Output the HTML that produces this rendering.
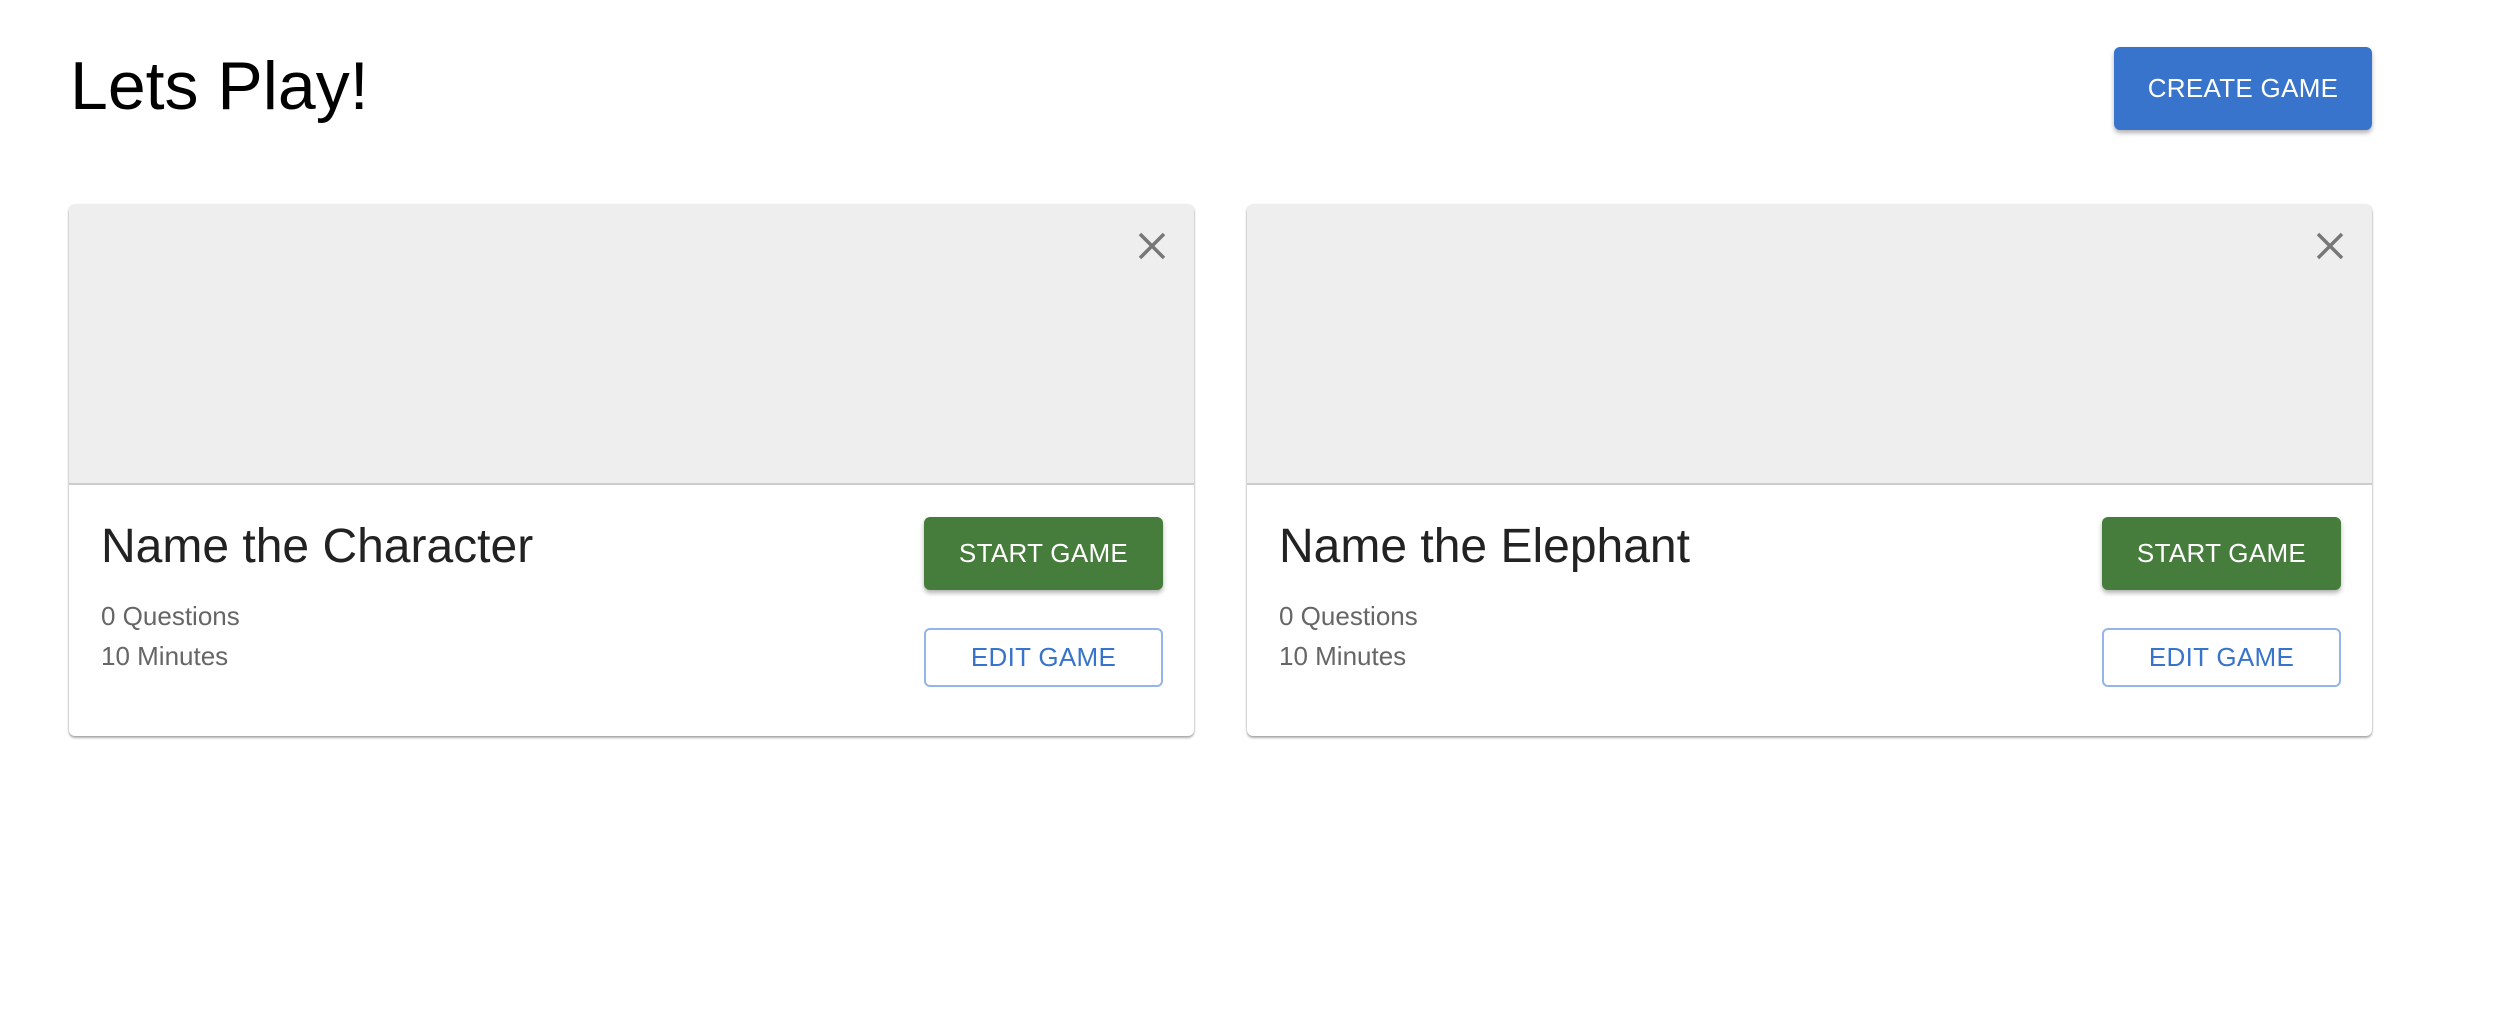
<!DOCTYPE html>
<html><head><style>
html,body{margin:0;padding:0;background:#fff;width:2502px;height:1018px;overflow:hidden;font-family:"Liberation Sans",sans-serif;}
h1{position:absolute;left:70px;top:46px;margin:0;font-size:68px;font-weight:400;line-height:80px;color:#000;}
.btn{position:absolute;box-sizing:border-box;border-radius:6px;display:flex;align-items:center;justify-content:center;font-size:26px;letter-spacing:0.3px;}
.create{left:2114px;top:47px;width:258px;height:83px;background:#3874cb;color:#fff;box-shadow:0 3px 5px rgba(0,0,0,.3);}
.card{position:absolute;top:205px;width:1125px;height:531px;background:#fff;border-radius:6px;box-shadow:0 2px 2px rgba(0,0,0,.3),0 0 2px rgba(0,0,0,.2);overflow:hidden;}
.img{position:absolute;left:0;top:0;width:100%;height:280px;background:#eee;border-bottom:2px solid #ccc;box-sizing:border-box;}
.x{position:absolute;right:28px;top:27px;}
.t{position:absolute;left:32px;top:315px;font-size:48px;color:#222;line-height:54px;}
.q{position:absolute;left:32px;top:391px;font-size:26px;color:#666;line-height:40px;}
.start{left:855px;top:312px;width:239px;height:73px;background:#467c3c;color:#fff;box-shadow:0 3px 5px rgba(0,0,0,.3);}
.edit{left:855px;top:423px;width:239px;height:59px;border:2px solid #93b5e8;color:#3874cb;}
</style></head><body>
<h1>Lets Play!</h1>
<div class="btn create">CREATE GAME</div>
<div class="card" style="left:69px">
<div class="img"><svg class="x" width="28" height="28" viewBox="0 0 28 28"><path d="M2 2L26 26M26 2L2 26" stroke="#777" stroke-width="3.5"/></svg></div>
<div class="t">Name the Character</div>
<div class="q">0 Questions<br>10 Minutes</div>
<div class="btn start">START GAME</div>
<div class="btn edit">EDIT GAME</div>
</div>
<div class="card" style="left:1247px">
<div class="img"><svg class="x" width="28" height="28" viewBox="0 0 28 28"><path d="M2 2L26 26M26 2L2 26" stroke="#777" stroke-width="3.5"/></svg></div>
<div class="t">Name the Elephant</div>
<div class="q">0 Questions<br>10 Minutes</div>
<div class="btn start">START GAME</div>
<div class="btn edit">EDIT GAME</div>
</div>
</body></html>
